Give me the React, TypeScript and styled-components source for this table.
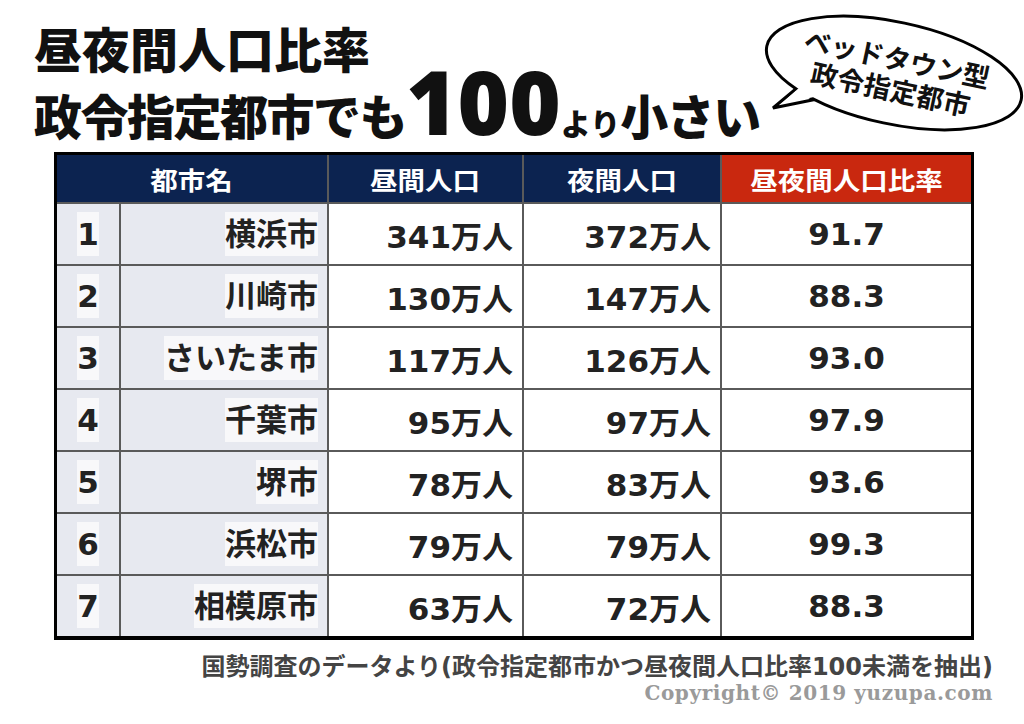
import React from "react";
import styled, { createGlobalStyle } from "styled-components";

const Global = createGlobalStyle`
  html, body { margin: 0; padding: 0; background: #fff; }
  body { font-family: "Noto Sans CJK JP", "Noto Sans", sans-serif; }
`;

const Page = styled.div`
  width: 1024px;
  height: 724px;
  display: flex;
  flex-direction: column;
  overflow: hidden;
  background: #fff;
`;

const TopRow = styled.div`
  height: 152px;
  display: flex;
  align-items: flex-start;
  padding-left: 34px;
  box-sizing: border-box;
`;

const Title = styled.h1`
  margin: 0;
  padding-top: 19px;
  font-weight: 900;
  color: #111;
  width: 716px;
  flex: none;
`;

const TitleLine = styled.div`
  font-size: 48px;
  line-height: 56px;
  white-space: nowrap;
`;

const TitleLine2 = styled(TitleLine)`
  line-height: 68px;
  margin-top: -8px;
  letter-spacing: -1.5px;
`;

const Big = styled.span<{ $size: number }>`
  font-size: ${(p) => p.$size}px;
  font-family: "Noto Sans", "Noto Sans CJK JP", sans-serif;
  letter-spacing: 0;
`;

const Bubble = styled.div`
  position: relative;
  width: 274px;
  height: 140px;
  flex: none;
`;

const BubbleText = styled.div`
  position: absolute;
  left: 144px;
  top: 73px;
  transform: translate(-50%, -50%) rotate(12deg);
  font-size: 27px;
  line-height: 31px;
  font-weight: 700;
  text-align: center;
  white-space: nowrap;
  color: #111;
`;

const Grid = styled.div`
  margin-left: 54px;
  width: 920px;
  box-sizing: border-box;
  border: 3px solid #000;
  border-bottom-width: 4px;
  background: #5a5a5a;
  display: grid;
  grid-template-columns: 62px 206px 193px 196px 249px;
  grid-template-rows: 47px repeat(7, 60px);
  gap: 2px;
`;

const Head = styled.div<{ $red?: boolean; $span?: number }>`
  grid-column: span ${(p) => p.$span ?? 1};
  background: ${(p) => (p.$red ? "#c9280f" : "#0c2350")};
  color: #fff;
  font-size: 25px;
  font-weight: 700;
  display: flex;
  align-items: center;
  justify-content: center;
`;

const Stretch = styled.span<{ $x: number; $origin: string }>`
  display: inline-block;
  transform: scaleX(${(p) => p.$x});
  transform-origin: ${(p) => p.$origin};
`;

const Cell = styled.div<{ $shade?: boolean; $align: "center" | "right" }>`
  background: ${(p) => (p.$shade ? "#e7e9f0" : "#fff")};
  display: flex;
  align-items: center;
  justify-content: ${(p) => (p.$align === "right" ? "flex-end" : "center")};
  padding-right: ${(p) => (p.$align === "right" ? "9px" : "0")};
  font-family: "DejaVu Sans", "Noto Sans CJK JP", sans-serif;
  font-size: 31px;
  font-weight: 700;
  color: #222;
`;

const Highlight = styled.span`
  background: #f8f8fa;
  line-height: 44px;
`;

const Footer = styled.div`
  padding-right: 31px;
  text-align: right;
  margin-top: 12px;
`;

const Note = styled.div`
  font-family: "DejaVu Sans", "Noto Sans CJK JP", sans-serif;
  font-size: 24px;
  line-height: 30px;
  font-weight: 700;
  color: #444;
`;

const Copy = styled.div`
  font-family: "DejaVu Serif", "Liberation Serif", serif;
  font-size: 20px;
  line-height: 22px;
  font-weight: 700;
  color: #9a9a9a;
  letter-spacing: 0.6px;
`;

const rows = [
  ["1", "横浜市", "341万人", "372万人", "91.7"],
  ["2", "川崎市", "130万人", "147万人", "88.3"],
  ["3", "さいたま市", "117万人", "126万人", "93.0"],
  ["4", "千葉市", "95万人", "97万人", "97.9"],
  ["5", "堺市", "78万人", "83万人", "93.6"],
  ["6", "浜松市", "79万人", "79万人", "99.3"],
  ["7", "相模原市", "63万人", "72万人", "88.3"],
];

function BubbleShape() {
  return (
    <svg width="274" height="140" viewBox="0 0 274 140">
      <path d="M47 88 L23 108 L67 99 Z" fill="#fff" stroke="#000" strokeWidth="3" strokeLinejoin="miter" />
      <ellipse cx="144" cy="73" rx="130" ry="51" transform="rotate(12 144 73)" fill="#fff" stroke="#000" strokeWidth="3" />
      <path d="M50 87 L31 104 L64 97 L64 90 Z" fill="#fff" />
    </svg>
  );
}

export default function App() {
  return (
    <Page>
      <Global />
      <TopRow>
        <Title>
          <TitleLine>昼夜間人口比率</TitleLine>
          <TitleLine2>
            政令指定都市でも<Big $size={88}>100</Big>
            <Big $size={30}>より</Big>小さい
          </TitleLine2>
        </Title>
        <Bubble>
          <BubbleShape />
          <BubbleText>
            ベッドタウン型
            <br />
            政令指定都市
          </BubbleText>
        </Bubble>
      </TopRow>
      <Grid>
        <Head $span={2}>
          <Stretch $x={1.1} $origin="center">都市名</Stretch>
        </Head>
        <Head>
          <Stretch $x={1.1} $origin="center">昼間人口</Stretch>
        </Head>
        <Head>
          <Stretch $x={1.1} $origin="center">夜間人口</Stretch>
        </Head>
        <Head $red>
          <Stretch $x={1.1} $origin="center">昼夜間人口比率</Stretch>
        </Head>
        {rows.map((r) => (
          <React.Fragment key={r[0]}>
            <Cell $shade $align="center">
              <Highlight>{r[0]}</Highlight>
            </Cell>
            <Cell $shade $align="right">
              <Highlight>{r[1]}</Highlight>
            </Cell>
            <Cell $align="right">{r[2]}</Cell>
            <Cell $align="right">{r[3]}</Cell>
            <Cell $align="center">{r[4]}</Cell>
          </React.Fragment>
        ))}
      </Grid>
      <Footer>
        <Note>国勢調査のデータより(政令指定都市かつ昼夜間人口比率100未満を抽出)</Note>
        <Copy>Copyright© 2019 yuzupa.com</Copy>
      </Footer>
    </Page>
  );
}
